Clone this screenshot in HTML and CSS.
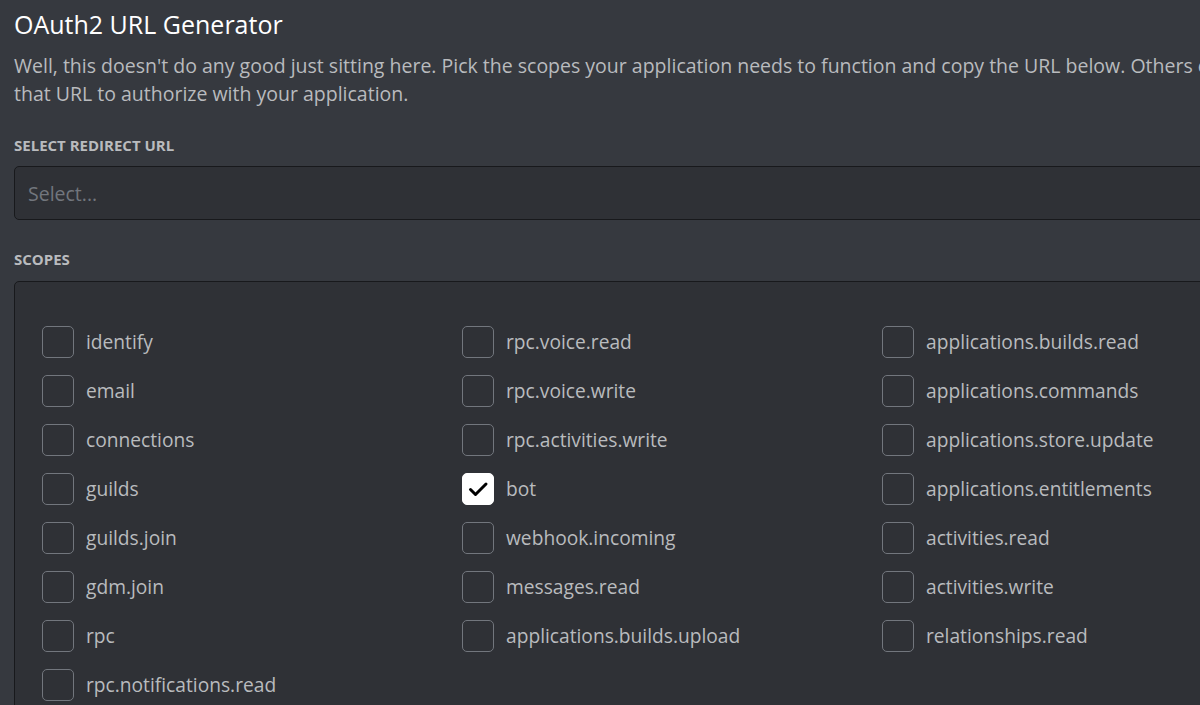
FILE: index.html
```html
<!DOCTYPE html>
<html lang="en">
<head>
<meta charset="utf-8">
<title>OAuth2 URL Generator</title>
<link rel="stylesheet" href="styles.css">
</head>
<body>
<main class="page">
  <h1 class="title">OAuth2 URL Generator</h1>
  <p class="desc">Well, this doesn't do any good just sitting here. Pick the scopes your application needs to function and copy the URL below. Others can use<br>that URL to authorize with your application.</p>

  <h2 class="label label-redirect">Select Redirect URL</h2>
  <div class="select"><span class="placeholder">Select...</span></div>

  <h2 class="label label-scopes">Scopes</h2>
  <div class="scopes">
    <div class="grid">
      <label class="scope"><span class="box"></span><span class="name">identify</span></label>
      <label class="scope"><span class="box"></span><span class="name">rpc.voice.read</span></label>
      <label class="scope"><span class="box"></span><span class="name">applications.builds.read</span></label>

      <label class="scope"><span class="box"></span><span class="name">email</span></label>
      <label class="scope"><span class="box"></span><span class="name">rpc.voice.write</span></label>
      <label class="scope"><span class="box"></span><span class="name">applications.commands</span></label>

      <label class="scope"><span class="box"></span><span class="name">connections</span></label>
      <label class="scope"><span class="box"></span><span class="name">rpc.activities.write</span></label>
      <label class="scope"><span class="box"></span><span class="name">applications.store.update</span></label>

      <label class="scope"><span class="box"></span><span class="name">guilds</span></label>
      <label class="scope"><span class="box checked"><svg class="check" viewBox="0 0 32 32" width="32" height="32"><path d="M8.5 16.5l5 5L24 11" fill="none" stroke="#000" stroke-width="3" stroke-linecap="round" stroke-linejoin="round"/></svg></span><span class="name">bot</span></label>
      <label class="scope"><span class="box"></span><span class="name">applications.entitlements</span></label>

      <label class="scope"><span class="box"></span><span class="name">guilds.join</span></label>
      <label class="scope"><span class="box"></span><span class="name">webhook.incoming</span></label>
      <label class="scope"><span class="box"></span><span class="name">activities.read</span></label>

      <label class="scope"><span class="box"></span><span class="name">gdm.join</span></label>
      <label class="scope"><span class="box"></span><span class="name">messages.read</span></label>
      <label class="scope"><span class="box"></span><span class="name">activities.write</span></label>

      <label class="scope"><span class="box"></span><span class="name">rpc</span></label>
      <label class="scope"><span class="box"></span><span class="name">applications.builds.upload</span></label>
      <label class="scope"><span class="box"></span><span class="name">relationships.read</span></label>

      <label class="scope"><span class="box"></span><span class="name">rpc.notifications.read</span></label>
    </div>
  </div>
</main>
</body>
</html>
```

FILE: styles.css
```css
html, body {
  margin: 0;
  padding: 0;
  background: #36393f;
  overflow: hidden;
  height: 705px;
}

body {
  font-family: "Open Sans", "Noto Sans", sans-serif;
  color: #b9bbbe;
}

.page {
  width: 1400px;
  padding: 8px 0 0 14px;
  box-sizing: border-box;
}

.title {
  margin: 0;
  font-size: 25px;
  line-height: 32px;
  font-weight: 400;
  color: #ffffff;
}

.desc {
  margin: 12px 0 0;
  font-size: 19.5px;
  line-height: 28px;
  color: #b9bbbe;
  white-space: nowrap;
}

.label {
  margin: 0;
  font-size: 15px;
  line-height: 20px;
  font-weight: 700;
  text-transform: uppercase;
  color: #b9bbbe;
}

.label-redirect {
  margin-top: 27px;
}

.select {
  margin-top: 11px;
  width: 1260px;
  height: 54px;
  box-sizing: border-box;
  border: 1px solid #18191c;
  border-radius: 5px;
  background: #2f3136;
  display: flex;
  align-items: center;
  padding-left: 13px;
}

.placeholder {
  font-size: 19.5px;
  color: #72767d;
}

.label-scopes {
  margin-top: 29px;
}

.scopes {
  margin-top: 12px;
  width: 1260px;
  box-sizing: border-box;
  border: 1px solid #18191c;
  border-radius: 5px;
  background: #2f3136;
  padding: 44px 0 40px 27px;
  height: 600px;
}

.grid {
  display: grid;
  grid-template-columns: 420px 420px 420px;
  row-gap: 17px;
}

.scope {
  display: flex;
  align-items: center;
  gap: 12px;
  height: 32px;
}

.box {
  position: relative;
  width: 32px;
  height: 32px;
  box-sizing: border-box;
  border: 1px solid #72767d;
  border-radius: 5px;
  flex: none;
}

.box.checked {
  background: #ffffff;
  border-color: #ffffff;
}

.check {
  position: absolute;
  left: -1px;
  top: -1px;
}

.name {
  font-size: 19.2px;
  line-height: 32px;
  color: #b9bbbe;
}
```
